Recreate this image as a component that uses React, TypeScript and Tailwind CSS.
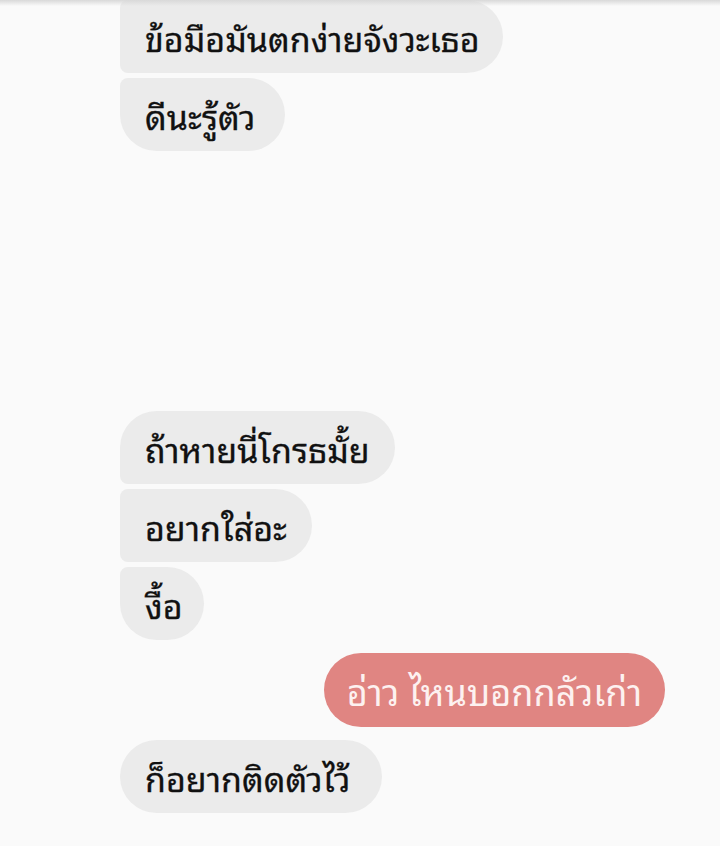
import React from "react";

const grayBase =
  "h-[73px] flex items-center whitespace-nowrap bg-[#ebebeb] text-[#111111] pl-[25px] text-[34px] font-normal [-webkit-text-stroke:0.3px_#111111] rounded-r-[37px]";

export default function App() {
  return (
    <div
      className="relative w-[720px] h-[846px] bg-[#fafafa] overflow-hidden"
      style={{ fontFamily: '"Noto Sans Thai Looped", "Noto Sans", "DejaVu Sans", sans-serif' }}
    >
      <div className="absolute top-0 left-0 right-0 h-[6px] bg-gradient-to-b from-[#d9d9d9] to-transparent z-10" />
      <div className="flex flex-col items-start pl-[120px] pr-[55px]">
        <div className="flex flex-col items-start gap-[5px]">
          <div className={`${grayBase} w-[383px] rounded-tl-[8px] rounded-bl-[8px]`}>
            ข้อมือมันตกง่ายจังวะเธอ
          </div>
          <div className={`${grayBase} w-[165px] rounded-tl-[8px] rounded-bl-[37px]`}>
            ดีนะรู้ตัว
          </div>
        </div>
        <div className="flex flex-col items-start gap-[5px] mt-[260px]">
          <div className={`${grayBase} w-[275px] rounded-tl-[37px] rounded-bl-[8px]`}>
            ถ้าหายนี่โกรธมั้ย
          </div>
          <div className={`${grayBase} w-[192px] rounded-tl-[8px] rounded-bl-[8px]`}>
            อยากใส่อะ
          </div>
          <div className={`${grayBase} w-[84px] rounded-tl-[8px] rounded-bl-[37px]`}>
            งื้อ
          </div>
        </div>
        <div className="self-end mt-[13px] h-[74px] w-[341px] flex items-center justify-center whitespace-nowrap bg-[#e08582] text-[#fdf1f0] text-[36px] font-normal rounded-full">
          อ่าว ไหนบอกกลัวเก่า
        </div>
        <div className={`${grayBase} mt-[13px] w-[262px] rounded-l-[37px]`}>
          ก็อยากติดตัวไว้
        </div>
      </div>
    </div>
  );
}
